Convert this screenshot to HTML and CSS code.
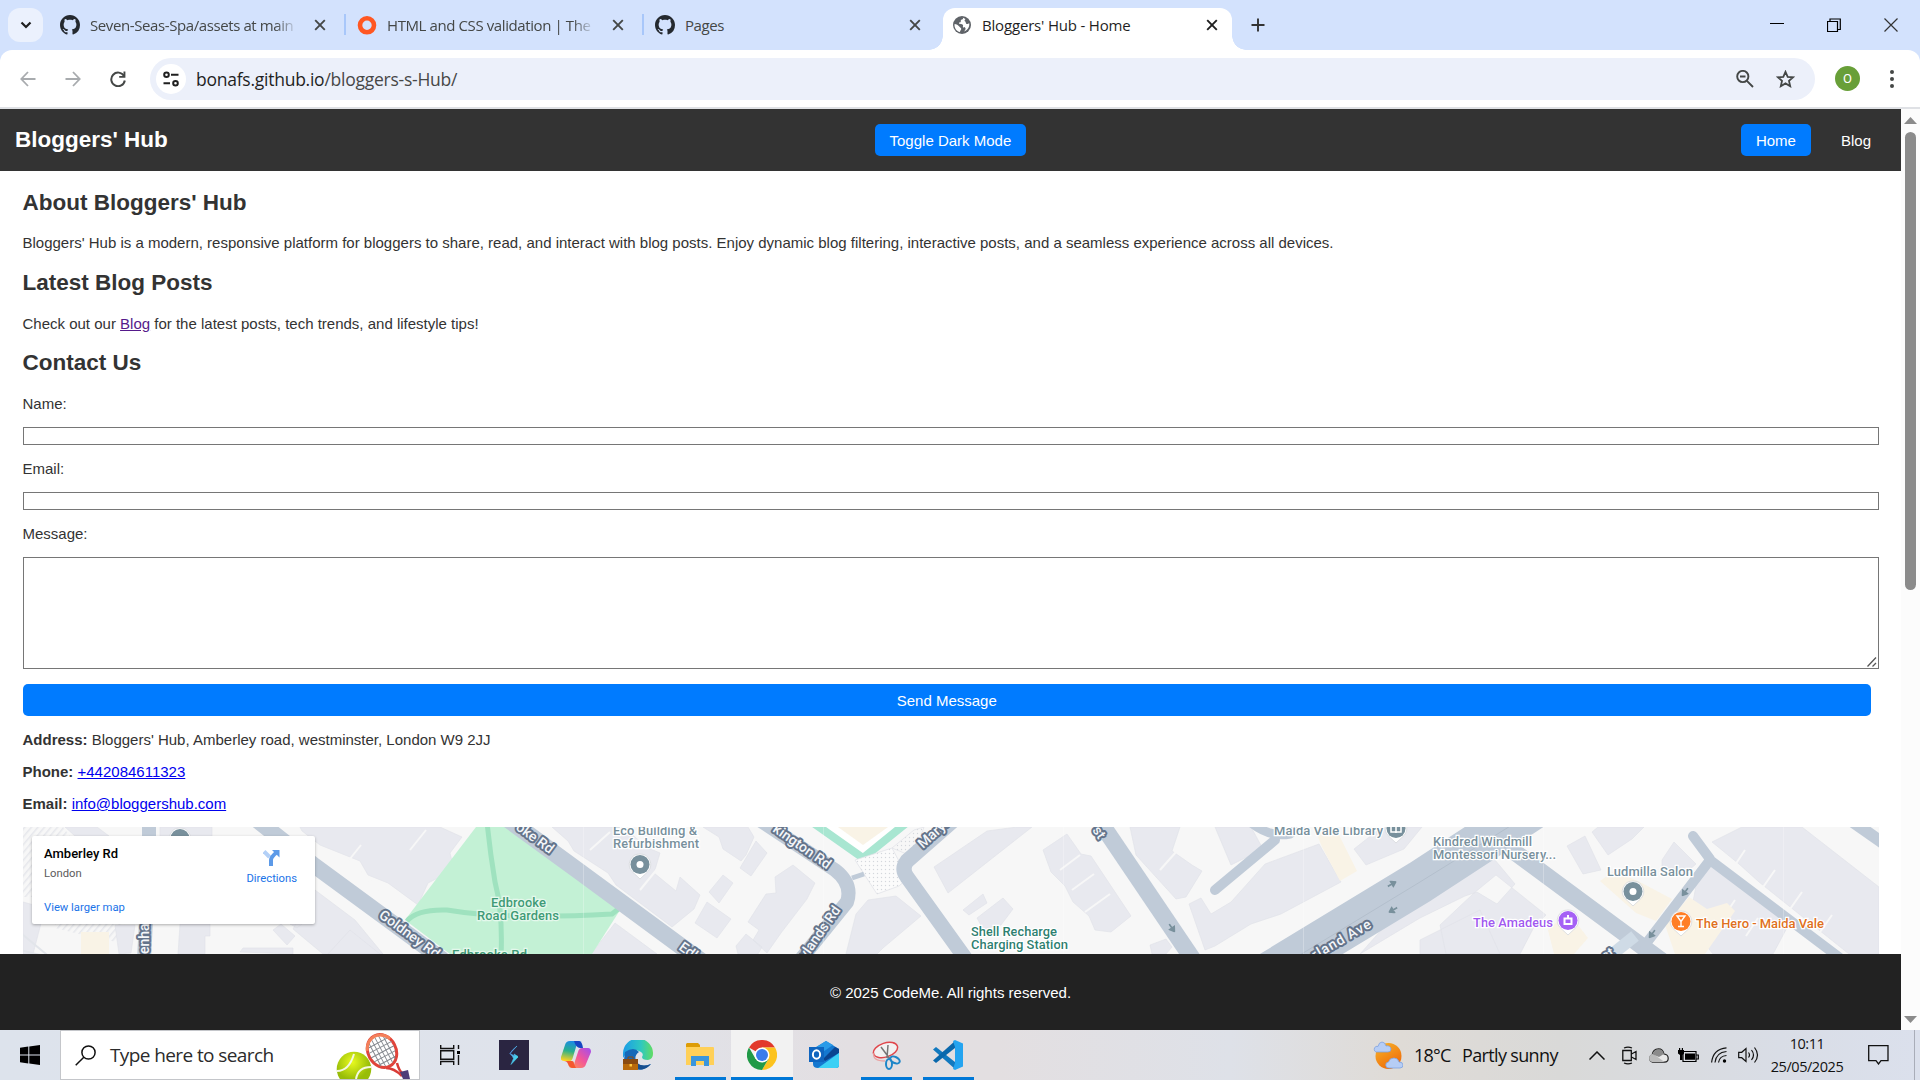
FILE: index.html
```html
<!DOCTYPE html>
<html lang="en">
<head>
<meta charset="utf-8">
<title>Bloggers' Hub - Home</title>
<link rel="stylesheet" href="styles.css">
</head>
<body>
<svg class="defs" width="0" height="0">
  <symbol id="github" viewBox="0 0 16 16"><path d="M8 0C3.58 0 0 3.58 0 8c0 3.54 2.29 6.53 5.47 7.59.4.07.55-.17.55-.38 0-.19-.01-.82-.01-1.49-2.01.37-2.53-.49-2.69-.94-.09-.23-.48-.94-.82-1.13-.28-.15-.68-.52-.01-.53.63-.01 1.08.58 1.23.82.72 1.21 1.87.87 2.33.66.07-.52.28-.87.51-1.07-1.78-.2-3.64-.89-3.64-3.95 0-.87.31-1.59.82-2.15-.08-.2-.36-1.02.08-2.12 0 0 .67-.21 2.2.82.64-.18 1.32-.27 2-.27s1.36.09 2 .27c1.53-1.04 2.2-.82 2.2-.82.44 1.1.16 1.92.08 2.12.51.56.82 1.27.82 2.15 0 3.07-1.87 3.75-3.65 3.95.29.25.54.73.54 1.48 0 1.07-.01 1.93-.01 2.2 0 .21.15.46.55.38A8 8 0 0 0 16 8c0-4.42-3.58-8-8-8z" fill="#24292f"/></symbol>
  <symbol id="close" viewBox="0 0 12 12"><path d="M1.2 1.2l9.600 9.600M10.800 1.200L1.200 10.800" stroke="currentColor" stroke-width="1.900" fill="none"/></symbol>
  <symbol id="arrow" viewBox="0 0 12 8"><path d="M0 4h7M6 .8L11 4 6 7.200z" fill="#78909c" stroke="#78909c" stroke-width="2"/></symbol>
  <symbol id="pin" viewBox="0 0 24 28"><path d="M12 1a10.500 10.500 0 0 0-8 17.500L12 26l8-7.500A10.500 10.500 0 0 0 12 1z" fill="#fff" stroke="#d5d8dc" stroke-width=".8"/><circle cx="12" cy="11.500" r="9.500" fill="currentColor"/></symbol>
</svg>

<div class="tabstrip">
  <div class="tab-search"><svg width="12" height="8" viewBox="0 0 12 8"><path d="M1.500 1.500L6 6l4.500-4.500" fill="none" stroke="#1f1f1f" stroke-width="2.200"/></svg></div>
  <div class="tab">
    <svg class="fav" width="20" height="20"><use href="#github"/></svg>
    <span class="tab-title faded">Seven-Seas-Spa/assets at main</span>
    <svg class="x" width="12" height="12"><use href="#close"/></svg>
  </div>
  <div class="tab">
    <svg class="fav" width="20" height="20" viewBox="0 0 20 20"><circle cx="10" cy="10.300" r="7" fill="none" stroke="#ff5722" stroke-width="4.600"/></svg>
    <span class="tab-title faded">HTML and CSS validation | The L</span>
    <svg class="x" width="12" height="12"><use href="#close"/></svg>
  </div>
  <div class="tab last">
    <svg class="fav" width="20" height="20"><use href="#github"/></svg>
    <span class="tab-title">Pages</span>
    <svg class="x" width="12" height="12"><use href="#close"/></svg>
  </div>
  <div class="tab active">
    <svg class="fav" width="18" height="18" viewBox="0 0 18 18"><circle cx="9" cy="9" r="9" fill="#5f6368"/><path d="M9.500 1.500c1 .8.500 1.800-.5 2-1.500.2-1.200 1.200-1.200 2C7.800 6.800 6 6 6 7.200c0 1 3 .6 3.800 1.500.8.800-.3 1.300.2 2.200.6.900 1.800 0 2.400 1 .6.900-.4 2.600-1.600 3.600 4-1 6-5 5.400-8.300-1 .3-1.700 1.300-2.700.7-1.200-.7-.3-2.400-1.600-2.700-.8-.2-.2-1.500.6-2.300zM1.600 8c2 0 3.500 1 4.400 2.300.8 1.300 2.600 1.500 2.200 3-.3 1.200-1.200 1.300-1.200 2.800C3.500 15.500 1 11.800 1.600 8z" fill="#fff"/></svg>
    <span class="tab-title">Bloggers' Hub - Home</span>
    <svg class="x" width="12" height="12"><use href="#close"/></svg>
  </div>
  <svg class="newtab" width="14" height="14" viewBox="0 0 14 14"><path d="M7 .5v13M.5 7h13" stroke="#333" stroke-width="1.900"/></svg>
  <div class="winctl">
    <svg width="14" height="14" viewBox="0 0 14 14"><path d="M0 5.500h14" stroke="#000"/></svg>
    <svg width="14" height="14" viewBox="0 0 14 14"><path d="M.5 3.500h10v10H.5zM3 3.500v-2.500h10.300v10.500h-2.800" fill="none" stroke="#000" stroke-width="1.200"/></svg>
    <svg width="14" height="14" viewBox="0 0 14 14"><path d="M.5 .5l13 13M13.500 .5l-13 13" stroke="#333" stroke-width="1.200"/></svg>
  </div>
</div>

<div class="toolbar">
  <svg class="nav" width="16" height="16" viewBox="0 0 16 16"><path d="M15.500 8H1.500M8 1L1.300 8 8 15" fill="none" stroke="#a8abae" stroke-width="1.800"/></svg>
  <svg class="nav" width="16" height="16" viewBox="0 0 16 16"><path d="M.5 8h14M8 1l6.700 7L8 15" fill="none" stroke="#a8abae" stroke-width="1.800"/></svg>
  <svg class="nav" width="16" height="16" viewBox="0 0 16 16"><path d="M14 5A6.800 6.800 0 1 0 14.800 9.500" fill="none" stroke="#444746" stroke-width="2"/><path d="M15.400 .5v6.300H9.200v-1.900h4.300V.5z" fill="#444746"/></svg>
  <div class="omnibox">
    <div class="site-info"><svg width="16" height="16" viewBox="0 0 16 16"><g fill="none" stroke="#1f1f1f" stroke-width="2"><circle cx="3.500" cy="3.800" r="2.300"/><path d="M8 3.800h7.500M.5 12.200H7"/><circle cx="12.500" cy="12.200" r="2.300"/></g></svg></div>
    <span class="url">bonafs.github.io<span class="path">/bloggers-s-Hub/</span></span>
    <svg class="mag" width="18" height="18" viewBox="0 0 18 18"><g fill="none" stroke="#444746" stroke-width="1.900"><circle cx="6.800" cy="6.500" r="5.600"/><path d="M10.900 10.900L17 17M4 6.500h5.500"/></g></svg>
    <svg class="star" width="19" height="18" viewBox="0 0 19 18"><path d="M9.500 1.800l2.200 5 5.400.5-4.100 3.600 1.200 5.300-4.700-2.800-4.700 2.800L6 10.900 1.900 7.300l5.400-.5z" fill="none" stroke="#444746" stroke-width="1.800"/></svg>
  </div>
  <div class="avatar">O</div>
  <svg class="dots" width="4" height="18" viewBox="0 0 4 18"><g fill="#444746"><circle cx="2" cy="2" r="2"/><circle cx="2" cy="9" r="2"/><circle cx="2" cy="16" r="2"/></g></svg>
</div>

<div class="viewport">
  <div class="page">
    <header class="site-header">
      <h1>Bloggers' Hub</h1>
      <button class="btn toggle">Toggle Dark Mode</button>
      <nav><a class="btn">Home</a><a class="btn plain">Blog</a></nav>
    </header>
    <main>
      <h2>About Bloggers' Hub</h2>
      <p>Bloggers' Hub is a modern, responsive platform for bloggers to share, read, and interact with blog posts. Enjoy dynamic blog filtering, interactive posts, and a seamless experience across all devices.</p>
      <h2>Latest Blog Posts</h2>
      <p class="tight">Check out our <a class="visited" href="#">Blog</a> for the latest posts, tech trends, and lifestyle tips!</p>
      <h2>Contact Us</h2>
      <form>
        <label>Name:</label><input type="text">
        <label>Email:</label><input type="email">
        <label>Message:</label>
        <div class="area"><textarea></textarea><svg class="grip" width="10" height="10" viewBox="0 0 10 10"><path d="M.5 9.500l8.500-9M5.500 9.500L9 6" stroke="#555" stroke-width="1.300"/></svg></div>
        <button class="btn send" type="button">Send Message</button>
      </form>
      <address>
        <div><b>Address:</b> Bloggers' Hub, Amberley road, westminster, London W9 2JJ</div>
        <div><b>Phone:</b> <a href="#">+442084611323</a></div>
        <div><b>Email:</b> <a href="#">info@bloggershub.com</a></div>
      </address>
      <div class="map">
        <svg width="1856" height="127" viewBox="23 827 1856 127">
          <defs><pattern id="dots" width="4" height="4" patternUnits="userSpaceOnUse"><circle cx="1.500" cy="1.500" r=".7" fill="#d4d7dc"/></pattern>
          <pattern id="hatch" width="5" height="5" patternUnits="userSpaceOnUse" patternTransform="rotate(40)"><path d="M0 0v5" stroke="#e6e7ec" stroke-width="3"/></pattern></defs>
          <rect x="23" y="827" width="1856" height="127" fill="#f7f7f7"/>
          <g fill="url(#hatch)"><path d="M23 827h40l12 16-52 22zM23 862h9v35h-9zM55 924h70l-8 18-22-4-40-10z"/></g>
          <g fill="#e8e9ef" stroke="#dfe0e7" stroke-width=".6">
            <path d="M65 827h32l12 9H75zM23 902l22 6-12 46H23zM160 827h52v9h-52zM180 924h30v12h-5v18h-27zM115 925h20l-4 28-12 1z"/>
            <path d="M273 930l8-6 14 12-8 9zM315 890l40 30 28 34h-60l-30-25zM290 924h12l-5 4zM240 952l3-4h50v6zM350 930l30 24h-52z"/>
            <path d="M300 827h140l22 10-12 16 2 8-12 16-12 6-10 22-30-22-20-8-8-14-40-16-18-14z"/>
            <path d="M552 827h72l22 20 14 6-6 20 22 18 4-14 20 18-6 14-22 18-56-42-8-12-34-22-6-10z"/>
            <path d="M703 827h45l6 10 -8 18-5 6-18-12-4-12zM740 868l16-27 11 12-16 23zM709 892l14-17 10 8-14 20zM695 923l12-21 24 17-14 19zM748 922l18-28 10-1-1-16 18-12 22 18-8 16-26 34-14 20-14-13 6-10zM736 946l10-12 16 13-4 7h-20z"/>
            <path d="M615 923l42 31h-66zM846 954l10-40 12-14 28-4 25 20-38 32-6 6zM934 867l53-36 30-4h15l-84 66zM963 910l20-16 4 9-18 12zM977 918l26-20 10 11-12 16-18 4z"/>
            <path d="M1043 850l24-16 14 20 10 2 24 36 16 24-20 16-16-2-6-14-16-14-8-16-14-14zM1130 827h50l-8 24 20 14 10 6-16 26-10 2-40-44zM1215 827h36l12 22-32 16zM1189 904l12-6 10 16 20-12 34-38 54-20 22 38-60 32-30 10-36 22-10 4zM1150 945l16-6 6 8-6 7h-14z"/>
            <path d="M1354 849l28-22h40l-18 22-38 16zM1360 954l60-36 45-22 12-4 20 12 18-20-20-24-20-6-60 38zM1440 925l34-32 22-18 50 40-12 12 -14 27h-74zM1420 940l60-30 20 44h-80z"/>
            <path d="M1567 846l18-10 16 34-18 4zM1592 832l6-5h46l-12 12-24 16zM1662 860l12-18 22 22-14 12-20-8zM1697 880l16-16 76 60-16 30h-60l-24-30zM1712 842l30-15h60l77 60v67h-30l-90-72-20-18z"/>
          </g>
          <g fill="none" stroke="#f7f7f7" stroke-width="2"><path d="M410 850l16-20M380 890l-20-18M345 865l16-20M640 890l18-22M590 850l20-18M1060 870l20-15M1072 890l22-16M1085 912l25-18M1160 870l16-18M1745 850l-12 18M1775 870l-14 20M1802 892l-14 20M1832 915l-14 20M1735 900l-12 18M1758 918l-12 18"/></g>
          <g fill="#f9f3e6"><path d="M81 932h28v22H81zM837 827h50l-24 20zM1314 827h21l22 44-17 10-18-34zM1600 881l14-10 24 10 34 18-16 22-20-8zM1548 930l20-18 20 26-14 16h-20zM1665 925l24-28 18 12 20-6 8 8-30 43h-30z"/></g>
          <path d="M476 827h34l112 80-30 47H450l-45-34z" fill="#c3f1d5"/>
          <g fill="none" stroke="#9fe2bf" stroke-width="5"><path d="M487 822q3 30 8 60 8 30 6 75M407 921q10-12 40-11 60 10 165 4l10-8"/></g>
          <path d="M812 822l51 36 47-38" fill="#fff" stroke="#a8e6d1" stroke-width="8"/>
          <path d="M838 827l25 18 25-18z" fill="#f9f3e6"/>
          <path d="M855 860l37-12 16 30-9 8-22 8z" fill="#fbfbfb"/><path d="M855 860l37-12 16 30-9 8-22 8zM892 848l22-18 10-3-10 30z" fill="url(#dots)" stroke="#dfe1e6" stroke-width=".7"/>
          <g fill="none" stroke="#c0cbd8" stroke-linejoin="round">
            <path d="M253 817l62 49 128 94" stroke-width="16"/>
            <path d="M149 820v40l-5 100" stroke-width="14"/>
            <path d="M502 815l78 57 140 103" stroke-width="17"/>
            <path d="M755 817l80 53q18 14 12 32l-50 62" stroke-width="14"/>
            <path d="M955 819l-48 42q-6 8 0 16l66 92" stroke-width="15"/>
            <path d="M852 878l12-4" stroke-width="5"/>
            <path d="M1094 813l100 148" stroke-width="17"/>
            <path d="M1215 890l60-50" stroke-width="10" stroke-linecap="round"/>
            <path d="M1250 822q20 16 40 12l14-12" stroke-width="9"/>
            <path d="M1270 973l150-91 130-85" stroke-width="43"/>
            <path d="M1505 845l115 85 50 37" stroke-width="17"/>
            <path d="M1645 945l65-85 130 98M1693 836l17 23" stroke-width="10" stroke-linecap="round"/>
            <path d="M1605 960l30-24" stroke-width="12" stroke="#cfdbe6"/>
            <path d="M1853 822l40 28" stroke-width="12"/>
            <path d="M10 924l60 50M0 945l60 15" stroke-width="2" stroke="#e2e5ea"/>
          </g>
          <path d="M1290 961l130-79 100-62" fill="none" stroke="#b3bfcc"/>
          <g>
            <use href="#arrow" x="-5" y="-4" width="10" height="8" transform="translate(1392 884) rotate(-30)"/>
            <use href="#arrow" x="-5" y="-4" width="10" height="8" transform="translate(1393 910) rotate(150)"/>
            <use href="#arrow" x="-5" y="-4" width="10" height="8" transform="translate(1172 928) rotate(55)"/>
            <use href="#arrow" x="-5" y="-4" width="10" height="8" transform="translate(1685 892) rotate(127)"/>
            <use href="#arrow" x="-5" y="-4" width="10" height="8" transform="translate(1652 934) rotate(127)"/>
          </g>
          <g class="road">
            <text transform="translate(378 917) rotate(36)">Goldney Rd</text>
            <text transform="translate(149 954) rotate(-90)">enha</text>
            <text transform="translate(515 829) rotate(36)">oke Rd</text>
            <text transform="translate(678 949) rotate(36)">Edbrooke</text>
            <text transform="translate(772 831) rotate(35)">kington Rd</text>
            <text transform="translate(806 960) rotate(-55)">ylands Rd</text>
            <text transform="translate(923 849) rotate(-42)">Maryl</text>
            <text transform="translate(1092 830) rotate(57)">st</text>
            <text transform="translate(1315 960) rotate(-30)" textLength="66">rland Ave</text>
            <text transform="translate(1605 961) rotate(-30)">st</text>
          </g>
          <g class="poi">
            <text x="613" y="835" textLength="84">Eco Building &amp;</text><text x="613" y="848" textLength="86">Refurbishment</text>
            <text x="1274" y="835" textLength="109">Maida Vale Library</text>
            <text x="1433" y="846" textLength="99">Kindred Windmill</text><text x="1433" y="859" textLength="123">Montessori Nursery...</text>
            <text x="1607" y="876" textLength="86">Ludmilla Salon</text>
          </g>
          <g class="poi park">
            <text x="491" y="907" textLength="55">Edbrooke</text><text x="477" y="920" textLength="82">Road Gardens</text><text x="452" y="959" textLength="75">Edbrooke Rd</text>
          </g>
          <g class="poi shell"><text x="971" y="936" textLength="86">Shell Recharge</text><text x="971" y="949" textLength="97">Charging Station</text></g>
          <g class="poi hotel"><text x="1473" y="927" textLength="80">The Amadeus</text></g>
          <g class="poi bar"><text x="1696" y="928" textLength="128">The Hero - Maida Vale</text></g>
          <g color="#78909c"><use href="#pin" x="628" y="853" width="24" height="28"/><use href="#pin" x="1621" y="880" width="24" height="28"/><use href="#pin" x="1384" y="817" width="24" height="28"/><use href="#pin" x="168" y="827" width="24" height="28"/></g>
          <circle cx="640" cy="864.500" r="3.500" fill="#fff"/><circle cx="1633" cy="891.500" r="3.500" fill="#fff"/>
          <path d="M1391 826h10v6h-10zM1396 824v9" fill="none" stroke="#fff" stroke-width="1.500"/>
          <use href="#pin" x="1556" y="909" width="24" height="28" color="#a561f5"/>
          <path d="M1564.500 918.500h7v5.500h-7zM1568 915v3" fill="none" stroke="#fff" stroke-width="2"/>
          <use href="#pin" x="1669" y="910" width="24" height="28" color="#ff7e26"/>
          <path d="M1677 916h8l-4 5.500zM1681 921v5M1678 926.500h6" fill="none" stroke="#fff" stroke-width="1.400"/>
          <path d="M583.500 827v127M823.500 827v127M1063.500 827v127M1303.500 827v127M1543.500 827v127M1783.500 827v127" stroke="#fff" stroke-opacity=".25"/>
        </svg>
        <div class="map-card">
          <div class="place"><strong>Amberley Rd</strong><span>London</span><a>View larger map</a></div>
          <div class="directions">
            <svg width="17" height="17" viewBox="0 0 17 17"><path d="M1 2.500l5.500 5.500" stroke="#b3d0f7" stroke-width="4"/><path d="M8 17V11q0-3 5.500-7.500" fill="none" stroke="#5c9ae8" stroke-width="4"/><path d="M9 1h7.500v7.500z" fill="#5c9ae8"/></svg>
            <a>Directions</a>
          </div>
        </div>
      </div>
    </main>
    <footer>© 2025 CodeMe. All rights reserved.</footer>
  </div>
  <div class="scrollbar">
    <svg width="13" height="7" viewBox="0 0 13 7"><path d="M0 7l6.500-7L13 7z" fill="#8b8b8b"/></svg>
    <div class="thumb"></div>
    <svg width="13" height="7" viewBox="0 0 13 7"><path d="M0 0l6.500 7L13 0z" fill="#8b8b8b"/></svg>
  </div>
</div>

<div class="taskbar">
  <div class="start"><svg width="20" height="20" viewBox="0 0 20 20"><path d="M0 2.800l8.300-1.200V9.500H0zM9.300 1.400L20 0v9.500H9.300zM0 10.500h8.300v7.900L0 17.200zM9.300 10.500H20V20L9.300 18.600z"/></svg></div>
  <div class="search">
    <svg width="21" height="21" viewBox="0 0 21 21"><g fill="none" stroke="#111" stroke-width="1.500"><circle cx="13.500" cy="7.500" r="6.600"/><path d="M8.800 12.200L.7 20.300"/></g></svg>
    <span>Type here to search</span>
    <svg class="tennis" width="74" height="46" viewBox="0 0 74 46">
      <defs><radialGradient id="ball" cx=".45" cy=".3"><stop offset="0" stop-color="#e8fa1e"/><stop offset="1" stop-color="#98bd08"/></radialGradient></defs>
      <circle cx="18" cy="36" r="17.300" fill="url(#ball)"/><path d="M1 38q12 0 17-17M20 46q2-12 15-12" fill="none" stroke="#f4f8e0" stroke-width="2"/>
      <path d="M50 35q8 0 16 8M61 30q2 8 6 11" fill="none" stroke="#d93b36" stroke-width="2.500"/>
      <g transform="rotate(-28 46 18)"><ellipse cx="46" cy="18" rx="14" ry="17" fill="#fff" stroke="#e0443b" stroke-width="3"/><path d="M38 5v26M42 3v30M46 2v32M50 3v30M54 5v26M34 9h24M33 14h26M33 19h26M34 24h24M37 29h18" stroke="#85898f" stroke-width="1"/><path d="M33 11q4-9 13-9.500 9 .5 13 9.500" fill="none" stroke="#f4805a" stroke-width="3"/></g>
      <path d="M64 39l8-2 2 9h-7z" fill="#4e3d78"/>
    </svg>
  </div>
  <div class="apps">
    <div class="app"><svg width="20" height="20" viewBox="0 0 20 20"><path d="M.7 0v3.500h13V0M.7 20v-3.500h13V20M.7 5.700h13v8.600H.7zM18.500 0v4M18.500 10v10" fill="none" stroke="#111" stroke-width="1.400"/><path d="M17 6h3v3h-3z"/></svg></div>
    <div class="app"><svg width="30" height="30" viewBox="0 0 30 30"><defs><linearGradient id="sg" x2="1" y2="1"><stop stop-color="#5a8cf5"/><stop offset="1" stop-color="#3ff0e8"/></linearGradient></defs><path d="M0 0h30v30H0z" fill="#2a2541"/><path d="M18 6l-7 7.500 4.500 2.500 3.500 1-7 7.500 2.500-6-1-2-2.500-3 2.500-3.500zM15 14l4 2.500-3 1z" fill="url(#sg)" stroke="url(#sg)" stroke-width=".6"/></svg></div>
    <div class="app"><svg width="30" height="28" viewBox="0 0 30 28"><defs><linearGradient id="c1" x1=".5" x2=".3" y2="1"><stop stop-color="#1b8be6"/><stop offset=".5" stop-color="#29b08c"/><stop offset="1" stop-color="#ffd21f"/></linearGradient><linearGradient id="c2" x1="1" x2="0" y2="1"><stop stop-color="#a04df0"/><stop offset=".5" stop-color="#f2569a"/><stop offset="1" stop-color="#ff9a4a"/></linearGradient></defs><path d="M14 0H9Q5 0 4 4L0 16q-1 4 3 4h6q2 0 3-4l3-10q1-6 6-6z" fill="url(#c1)"/><path d="M11 0h7q3 0 4 7h-3q-4 0-6-7z" fill="#1746c2"/><path d="M11 27h9q4 0 5-4l5-12q0-4-3-4h-6q-3 0-4 4l-3 9q-1 6-6 6z" fill="url(#c2)"/><path d="M3 20h8q2 0 2 3l2 4h-3q-4 0-5-4-1-3-4-3z" fill="#f4592f"/></svg></div>
    <div class="app"><svg width="30" height="30" viewBox="0 0 30 30"><defs><linearGradient id="e1" x2="1"><stop stop-color="#1b9ce8"/><stop offset=".6" stop-color="#2fc8c0"/><stop offset="1" stop-color="#62dc63"/></linearGradient></defs><path d="M0 13A15 15 0 0 1 30 14q0 5-5 6-6 0-6-3 2-3-1-5Q8 6 0 18z" fill="url(#e1)"/><path d="M2 12q9-6 14 0-6 4-2 11 5 5 14 1-7 8-17 5L1 20z" fill="#1668b8"/><path d="M13 22q6 6 15 2-6 7-13 5z" fill="#174f8f"/><path d="M0 19h15v11H0z" fill="#b8690b"/><path d="M0 19h15v5H0z" fill="#8a4a10"/><path d="M5 19v-2h5v2" fill="none" stroke="#8a4a10"/><path d="M6.500 24h2.500v2.500H6.500z" fill="#ffc83d"/></svg></div>
    <div class="app running"><svg width="28" height="24" viewBox="0 0 28 24"><path d="M1 0h11l2 2v4H0V1z" fill="#dd9c06"/><path d="M0 4h27q1 0 1 1v17H0z" fill="#ffd058"/><path d="M5 23V13h18v10h-5v-5h-8v5z" fill="#3a96dd"/></svg></div>
    <div class="app running current"><svg width="30" height="30" viewBox="0 0 30 30"><path d="M15 15L2 7.500A15 15 0 0 1 28 7.500H15z" fill="#e2392c"/><path d="M28 7.500A15 15 0 0 1 15 30l6.500-11.200L15 7.500z" fill="#fcc31e"/><path d="M2 7.500A15 15 0 0 0 15 30l6.500-11.200H8.500z" fill="#219a47"/><circle cx="15" cy="15" r="7.500" fill="#fff"/><circle cx="15" cy="15" r="6" fill="#3a7cec"/></svg></div>
    <div class="app"><svg width="30" height="28" viewBox="0 0 30 28"><path d="M4 8L17 0l13 8v16q0 3-3 3H9q-5 0-5-4z" fill="#1478d0"/><path d="M4 8L17 0l7 4L8 15z" fill="#2a9be8"/><path d="M14 18l12-12 4 2v4L16 20z" fill="#0a4490"/><path d="M9 27l21-15v12q0 3-3 3z" fill="#3bd0f5"/><path d="M0 6h15v15H0z" fill="#0f65bf"/><ellipse cx="7.500" cy="13.500" rx="3.600" ry="4.200" fill="none" stroke="#fff" stroke-width="2"/></svg></div>
    <div class="app running"><svg width="29" height="29" viewBox="0 0 29 29"><g fill="none"><ellipse cx="13.500" cy="9" rx="12.500" ry="7" transform="rotate(-18 13.500 9)" fill="#f2f2f2" stroke="#e0474c" stroke-width="1.500"/><path d="M2 12q-2 8 11 8" stroke="#eaa3a3" stroke-width="1.300"/><path d="M9 6l9 12M16 4l-1 13" stroke="#777" stroke-width="1.500"/><ellipse cx="17" cy="23" rx="3" ry="5" stroke="#1e86c8" stroke-width="2"/><ellipse cx="23" cy="19" rx="5" ry="3" transform="rotate(25 23 19)" stroke="#1e86c8" stroke-width="2"/></g></svg></div>
    <div class="app running"><svg width="30" height="30" viewBox="0 0 30 30"><path d="M0 9.500L3 7l19 15v7z" fill="#1279bf"/><path d="M0 20.500L3 23 22 8V1z" fill="#0a68ac"/><path d="M22 0l8 3.500v23L22 30l-2-1 2-6V7l-2-6z" fill="#24a4f0"/></svg></div>
  </div>
  <div class="weather">
    <svg width="30" height="29" viewBox="0 0 30 29"><defs><linearGradient id="sun" x2=".6" y2="1"><stop stop-color="#f7b52a"/><stop offset="1" stop-color="#ef6c0a"/></linearGradient></defs><circle cx="15.500" cy="15" r="13" fill="url(#sun)"/><path d="M3 11a3 3 0 0 1 0-5.500q1-.5 2 0Q6 1 9 1t4 4q4-1 5 3 0 3-3 3zM16 27a3 3 0 0 1-.5-6q1-4 5.500-4 4 0 5 4 4 0 4 3 0 3-3 3z" fill="#b6cdf5" stroke="#7fa2e0" stroke-width=".8"/></svg>
    <span class="temp">18°C</span><span class="cond">Partly sunny</span>
  </div>
  <div class="tray">
    <svg width="16" height="9" viewBox="0 0 16 9"><path d="M.5 8.500L8 1l7.500 7.500" fill="none" stroke="#111" stroke-width="1.500"/></svg>
    <svg class="meet" width="15" height="19" viewBox="0 0 15 19"><path d="M.8 4.500h8.500v10H.8zM9.500 8L14 5.500v8L9.500 11M2 2Q6 .3 10 2M2 17q4 1.700 8 0" fill="none" stroke="#111" stroke-width="1.300"/></svg>
    <svg class="cloud" width="21" height="15" viewBox="0 0 21 15"><path d="M4.500 14.200a4 4 0 0 1-.3-7.500Q5 1 10.500.8 15 .8 16 6q4.200.5 4.200 4.200T16.500 14.200z" fill="#e9e9e9" stroke="#222" stroke-width="1.200"/><path d="M1.500 8Q4 5 5.500 6l11 8H4q-4-1-2.500-6z" fill="#bbb"/><path d="M4.500 6.300Q6 1.200 10.500 1.200 15 1.300 15.800 6L11 9z" fill="#8b8b8b"/></svg>
    <svg class="battery" width="21" height="14" viewBox="0 0 21 14"><path d="M5 3.500h13v10H5zM18.500 7H20.300v4h-1.800" fill="none" stroke="#000" stroke-width="1.200"/><path d="M7 5.500h10v6.200H7zM0 2h6v3.500L4.500 7v5H2V7L0 5.500zM1 0h1.200v3H1zM3.800 0H5v3H3.800z"/></svg>
    <svg class="wifi" width="16" height="16" viewBox="0 0 16 16"><g fill="none" stroke="#111" stroke-width="1.200"><path d="M.6 15.500Q2 2 15.500.8M4 15.500Q5 5.500 15.500 4.500M7.500 15.500Q8.500 9 15.500 8.500"/></g><circle cx="13.500" cy="14" r="1.700"/></svg>
    <svg class="sound" width="21" height="18" viewBox="0 0 21 18"><path d="M.7 6.300h3L8 2.500v13l-4.300-3.800h-3zM10.500 6.500q2 2.500 0 5M13.500 4q4 5 0 10M16.500 1.500q6 7.500 0 15" fill="none" stroke="#111" stroke-width="1.200"/></svg>
  </div>
  <div class="clock"><span>10:11</span><span>25/05/2025</span></div>
  <svg class="notif" width="21" height="20" viewBox="0 0 21 20"><path d="M.7.700h19.300v15H13L10.500 19 8 15.700H.7z" fill="none" stroke="#111" stroke-width="1.300"/></svg>
</div>
</body>
</html>
```
FILE: styles.css
```css
* { box-sizing: border-box; }
html, body { margin: 0; width: 1920px; height: 1080px; overflow: hidden; }
body { display: flex; flex-direction: column; background: #d3e2fd; font-family: "Open Sans", "Noto Sans", sans-serif; }
svg { display: block; flex: none; }
.defs { position: absolute; }

/* Browser tabs */
.tabstrip { height: 50px; flex: none; display: flex; padding: 8px 22px 0 8px; background: #d3e2fd; }
.tab-search { width: 35px; height: 34px; border-radius: 12px; background: #ebf1fd; display: flex; align-items: center; justify-content: center; }
.tab { width: 298px; height: 34px; display: flex; align-items: center; padding: 0 21px 0 12px; position: relative; color: #444746; font-size: 15px; white-space: nowrap; }
.tab-search + .tab { width: 299px; margin-left: 5px; }
.tab + .tab { padding-left: 10px; }
.tab .x { margin-left: auto; }
.tab::after { content: ""; position: absolute; right: 1px; top: 6px; width: 2px; height: 21px; background: #a8c7fa; }
.tab.last::after, .tab.active::after { display: none; }
.tab.last { width: 298px; padding-right: 22px; }
.tab-title { margin-left: 10px; letter-spacing: -.4px; line-height: 30px; padding-bottom: 1px; }
.faded { width: 208px; overflow: hidden; -webkit-mask-image: linear-gradient(to right, #000 185px, transparent 208px); mask-image: linear-gradient(to right, #000 185px, transparent 208px); }
.tab.active { width: 289px; height: 42px; padding: 0 14px 8px 10px; background: #fff; border-radius: 12px 12px 0 0; color: #1f1f1f; }
.tab.active::before { content: ""; position: absolute; left: -14px; right: -14px; bottom: 0; height: 14px; background: radial-gradient(circle at 0 0, transparent 13.500px, #fff 14px) left / 14px 14px no-repeat, radial-gradient(circle at 100% 0, transparent 13.500px, #fff 14px) right / 14px 14px no-repeat; }
.tab.active .tab-title { margin-left: 11px; letter-spacing: -.18px; }
.newtab { margin: 10px 0 0 19px; }
.winctl { margin-left: auto; display: flex; gap: 43px; padding-top: 10px; }

/* Address bar */
.toolbar { height: 59px; flex: none; display: flex; align-items: center; background: #fff; border-bottom: 2px solid #dfe1e5; border-radius: 12px 12px 0 0; padding: 0 26px 0 20px; }
.nav { margin-right: 29px; }
.nav + .nav + .nav { margin-right: 24px; }
.omnibox { flex: 1; height: 42px; border-radius: 21px; background: #ecf0fa; display: flex; align-items: center; padding: 0 20px 0 6px; }
.site-info { width: 30px; height: 30px; border-radius: 50%; background: #fff; display: flex; align-items: center; justify-content: center; }
.url { margin-left: 10px; font-size: 17.500px; letter-spacing: -.25px; color: #1f1f1f; padding-top: 1px; }
.path { color: #474747; }
.mag { margin-left: auto; }
.star { margin-left: 22px; }
.avatar { margin-left: 20px; width: 25px; height: 25px; border-radius: 50%; background: #689f38; color: #fff; font: 13px/25px Roboto, sans-serif; text-align: center; }
.dots { margin-left: 30px; }

/* Page */
.viewport { height: 921px; flex: none; display: flex; background: #fff; overflow: hidden; }
.page { width: 1901px; display: flex; flex-direction: column; font: 15px/24px "Liberation Sans", Arial, sans-serif; color: #333; }
.site-header { height: 62px; flex: none; background: #333; color: #fff; padding: 15px; display: flex; align-items: center; justify-content: space-between; }
h1 { margin: 0; font-size: 22.500px; line-height: 30px; padding-bottom: 1px; }
nav { display: flex; gap: 15px; }
.btn { display: block; height: 32px; border: 0; border-radius: 5px; padding: 0 15px; background: #007bff; color: #fff; font: 15px/33px "Liberation Sans", Arial, sans-serif; text-decoration: none; }
.btn.plain { background: none; }
.toggle { margin-right: 8px; }
main { height: 783px; flex: none; overflow: hidden; padding: 16.500px 22px 0 22.500px; }
h2 { margin: 0; font-size: 22.500px; line-height: 30px; }
p { margin: 13px 0; }
p.tight { margin: 14px 0 12px; }
form { padding-top: 14.500px; }
label { display: block; margin-bottom: 11px; }
input, textarea { display: block; width: 100%; border: 1px solid #767676; padding: 0; margin: 0 0 12px; background: #fff; }
input { height: 18px; }
.area { position: relative; margin-bottom: 15px; }
textarea { height: 112px; margin: 0; resize: none; }
.grip { position: absolute; right: 2px; bottom: 2px; }
.send { width: calc(100% - 8px); padding: 0; }
address { font-style: normal; padding-top: 12px; display: grid; gap: 8px; }
a { color: #00e; }
a.visited { color: #551a8b; }
a.btn { color: #fff; }
.map { position: relative; margin-top: 11px; height: 127px; overflow: hidden; }
.map text { font-family: Roboto, sans-serif; }
.road text { font-size: 14px; font-weight: 500; fill: #f5f7fa; stroke: #64748b; stroke-width: 4px; paint-order: stroke; stroke-linejoin: round; }
.poi text { font-size: 13px; font-weight: 500; fill: #78909c; stroke: #fff; stroke-width: 2.500px; paint-order: stroke; }
.park text { fill: #3f9a76; stroke: #e4f8ec; }
.shell text { fill: #2e8070; }
.hotel text { fill: #a158f0; }
.bar text { fill: #e07020; }
.map-card { position: absolute; left: 9.500px; top: 9px; width: 283px; height: 88px; background: #fff; border-radius: 2px; box-shadow: 0 1px 3px rgba(0,0,0,.3); display: flex; justify-content: space-between; padding: 8px 18px 0 12px; font: 11.250px/20px Roboto, sans-serif; }
.map-card a { color: #1a73e8; text-decoration: none; }
.place { display: flex; flex-direction: column; }
.place strong { color: #000; font-size: 13px; font-weight: 500; }
.place span { color: #5b5b5b; }
.place a { margin-top: 14px; }
.directions { display: flex; flex-direction: column; align-items: center; padding-top: 5px; }
.directions a { margin-top: 3px; }
footer { flex: 1; background: #222; color: #fff; text-align: center; line-height: 77px; }
.scrollbar { width: 19px; background: #fcfcfc; display: flex; flex-direction: column; align-items: center; padding: 8px 0 7px; }
.thumb { width: 11px; height: 458px; margin: 8px 0 auto; border-radius: 6px; background: #8b8b8b; }

/* Windows taskbar */
.taskbar { height: 50px; flex: none; display: flex; align-items: center; color: #111; background: linear-gradient(90deg, #dde3ec 0, #dfe3eb 550px, #e3dfe2 850px, #e3dfe1 1000px, #dee1e8 1230px, #dfdbd6 1400px, #d9d9d8 1560px, #d9dde6 1780px, #dbe0ec 1914px, #a9adb8 1914px, #a9adb8 1915px, #dbe0ec 1915px); }
.start { width: 60px; padding-left: 20px; }
.search { width: 360px; height: 50px; border: 1px solid #c4c6ca; background: #fff; display: flex; align-items: center; padding-left: 14px; font-size: 19px; }
.search span { margin-left: 14px; letter-spacing: -.6px; white-space: nowrap; color: #2b2b2b; }
.tennis { margin: 2px 9px 0 auto; }
.apps { display: flex; margin-left: -2px; }
.app { width: 62px; height: 50px; display: flex; align-items: center; justify-content: center; position: relative; }
.app:first-child { width: 64px; margin-right: 1px; }
.running::after { content: ""; position: absolute; left: 6px; right: 5px; bottom: 0; height: 3px; background: #0078d7; }
.current { background: #f2f2f2; }
.current::after { left: 0; right: 0; }
.weather { margin-left: 394px; display: flex; align-items: center; font-size: 18px; white-space: nowrap; width: 216px; }
.temp { margin-left: 11px; width: 48px; letter-spacing: -.8px; }
.cond { letter-spacing: -.65px; }
.tray { display: flex; align-items: center; width: 168px; }
.meet { margin-left: 17px; }
.cloud { margin-left: 11px; }
.battery { margin-left: 9px; }
.wifi { margin-left: 12px; }
.sound { margin-left: 11px; }
.clock { width: 78px; margin-left: 11px; display: flex; flex-direction: column; align-items: center; font-size: 14.500px; line-height: 23px; letter-spacing: -.45px; }
.notif { margin-left: 22px; }
```
